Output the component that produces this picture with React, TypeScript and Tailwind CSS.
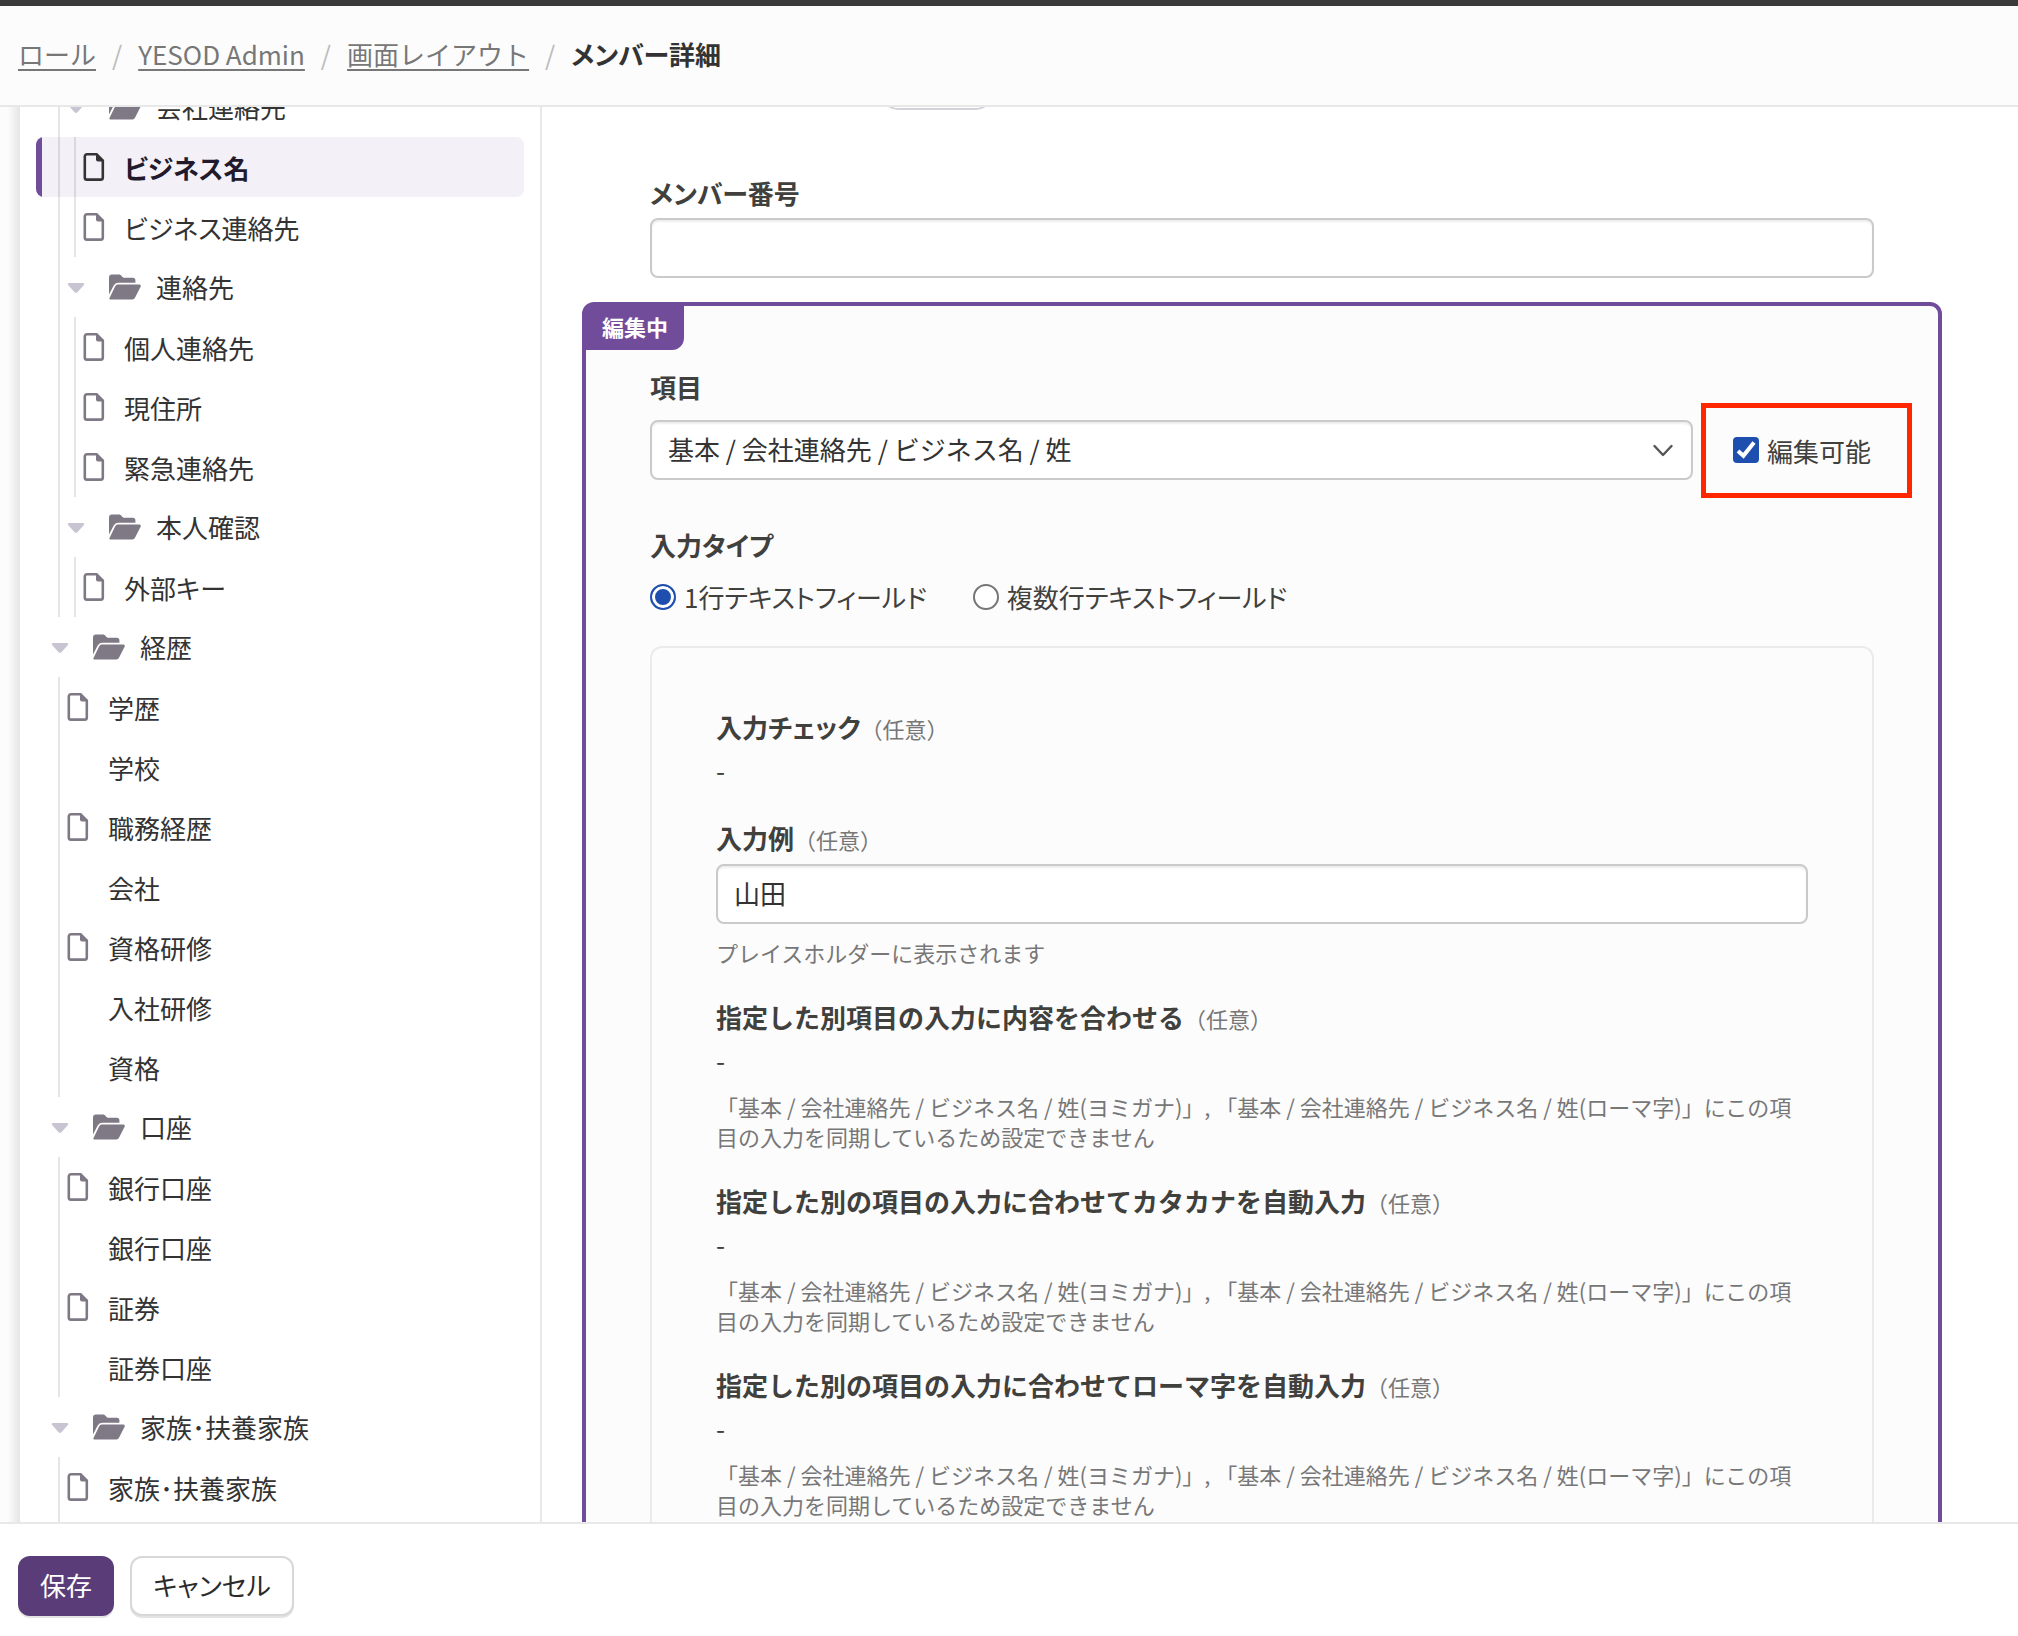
import { useState } from "react";

type TreeItem = {
  label: string;
  kind: "folder" | "file" | "entry";
  depth: 1 | 2;
  active?: boolean;
};

const treeItems: TreeItem[] = [
  { label: "会社連絡先", kind: "folder", depth: 2 },
  { label: "ビジネス名", kind: "file", depth: 2, active: true },
  { label: "ビジネス連絡先", kind: "file", depth: 2 },
  { label: "連絡先", kind: "folder", depth: 2 },
  { label: "個人連絡先", kind: "file", depth: 2 },
  { label: "現住所", kind: "file", depth: 2 },
  { label: "緊急連絡先", kind: "file", depth: 2 },
  { label: "本人確認", kind: "folder", depth: 2 },
  { label: "外部キー", kind: "file", depth: 2 },
  { label: "経歴", kind: "folder", depth: 1 },
  { label: "学歴", kind: "file", depth: 1 },
  { label: "学校", kind: "entry", depth: 1 },
  { label: "職務経歴", kind: "file", depth: 1 },
  { label: "会社", kind: "entry", depth: 1 },
  { label: "資格研修", kind: "file", depth: 1 },
  { label: "入社研修", kind: "entry", depth: 1 },
  { label: "資格", kind: "entry", depth: 1 },
  { label: "口座", kind: "folder", depth: 1 },
  { label: "銀行口座", kind: "file", depth: 1 },
  { label: "銀行口座", kind: "entry", depth: 1 },
  { label: "証券", kind: "file", depth: 1 },
  { label: "証券口座", kind: "entry", depth: 1 },
  { label: "家族･扶養家族", kind: "folder", depth: 1 },
  { label: "家族･扶養家族", kind: "file", depth: 1 },
];

const syncNote =
  "「基本 / 会社連絡先 / ビジネス名 / 姓(ヨミガナ)」, 「基本 / 会社連絡先 / ビジネス名 / 姓(ローマ字)」にこの項目の入力を同期しているため設定できません";

const inputClass =
  "block h-15 w-full rounded-lg border-2 border-[#cacaca] bg-white px-4 pb-1 text-[#333] shadow-[inset_0_2px_2px_#eeeeee] [font-feature-settings:normal]";

const noteClass =
  "mt-[13px] text-[22px] leading-[30px] text-[#777] [font-feature-settings:normal]";

const crumbClass =
  "underline decoration-2 underline-offset-4 [font-feature-settings:normal]";

const radioClass =
  "size-[26px] appearance-none rounded-full border-2 border-[#767676] bg-white checked:border-[#1f4fae] checked:bg-[#1f4fae] checked:shadow-[inset_0_0_0_3px_white]";

function FileIcon() {
  return (
    <svg width="22" height="30" viewBox="0 0 22 30" fill="none">
      <path
        d="M4 2.2H13.6L19.8 8.6V25.4A2.2 2.2 0 0 1 17.6 27.6H4A2.2 2.2 0 0 1 1.8 25.4V4.4A2.2 2.2 0 0 1 4 2.2Z"
        stroke="currentColor"
        strokeWidth="2.6"
      />
      <path d="M13 1.5V7.4A2 2 0 0 0 15 9.4H21Z" fill="currentColor" />
    </svg>
  );
}

function FolderIcon() {
  return (
    <svg width="32" height="26" viewBox="0 0 32 26" fill="currentColor">
      <path d="M0 20.5V3A2.6 2.6 0 0 1 2.6 .5H10A3 3 0 0 1 12.2 1.4L13.6 2.9A3 3 0 0 0 15.8 3.8H23.8A2.6 2.6 0 0 1 26.4 6.4V8.8H9A5 5 0 0 0 4.7 11.4Z" />
      <path d="M.4 24.2L6.1 12.4A3 3 0 0 1 8.8 10.6H30.4A1.4 1.4 0 0 1 31.6 12.7L26 23.8A3 3 0 0 1 23.3 25.5H1.3A.9.9 0 0 1 .4 24.2Z" />
    </svg>
  );
}

function CaretIcon() {
  return (
    <svg
      className="mt-1"
      width="18"
      height="12"
      viewBox="0 0 18 12"
      fill="#c9c4d1"
    >
      <path d="M2 1H16A1.2 1.2 0 0 1 16.9 3.1L10.4 10.2A2 2 0 0 1 7.6 10.2L1.1 3.1A1.2 1.2 0 0 1 2 1Z" />
    </svg>
  );
}

function TreeRow({ item }: { item: TreeItem }) {
  const nested = item.depth === 2;

  return (
    <li
      className={`flex h-15 overflow-hidden rounded-lg ${item.active ? "bg-[#f3f1f7]" : ""}`}
    >
      <span
        className={`w-[6px] shrink-0 ${item.active ? "bg-[#714c9b]" : ""}`}
      />
      {/* Guide lines */}
      <span
        className={`ml-4 w-[2px] shrink-0 ${nested || item.kind !== "folder" ? "bg-black/10" : ""}`}
      />
      {nested && (
        <span
          className={`ml-[14px] w-[2px] shrink-0 ${item.kind !== "folder" ? "bg-black/10" : ""}`}
        />
      )}
      {item.kind === "folder" ? (
        <button
          type="button"
          className="-ml-[9px] flex items-center pb-[2px] text-[#7f7985]"
        >
          <CaretIcon />
          <span className="mt-[2px] mr-[15px] ml-6">
            <FolderIcon />
          </span>
          <span className="text-[#333]">{item.label}</span>
        </button>
      ) : (
        <a
          href="#"
          className={`ml-[7px] flex items-center ${item.active ? "font-bold text-[#221a2c]" : "text-[#333]"}`}
        >
          <span
            className={`mr-[19px] w-[22px] ${item.active ? "text-[#333]" : "text-[#7f7985]"}`}
          >
            {item.kind === "file" && <FileIcon />}
          </span>
          {item.label}
        </a>
      )}
    </li>
  );
}

function FieldTitle({ children }: { children: string }) {
  return (
    <>
      <span className="font-bold">{children}</span>
      <span className="text-[22px] text-[#777] [font-feature-settings:normal]">
        （任意）
      </span>
    </>
  );
}

function ReadOnlyField({ title, note }: { title: string; note?: string }) {
  return (
    <div className={note ? "[font-feature-settings:normal]" : ""}>
      <h3 className="leading-10">
        <FieldTitle>{title}</FieldTitle>
      </h3>
      <p className="mt-1 leading-9">-</p>
      {note && <p className={noteClass}>{note}</p>}
    </div>
  );
}

function App() {
  const [memberNumber, setMemberNumber] = useState("");
  const [example, setExample] = useState("山田");
  const [editable, setEditable] = useState(true);
  const [inputType, setInputType] = useState("single");

  return (
    <div
      lang="ja"
      className="flex h-screen flex-col bg-white font-['Noto_Sans_CJK_JP',sans-serif] text-[26px] text-[#40403d] [font-feature-settings:'palt']"
    >
      <header className="shrink-0 border-t-6 border-b-2 border-t-[#3a3a3a] border-b-[#e8e8e8] bg-[#fcfcfc]">
        <nav className="flex h-[99px] items-center gap-4 px-[18px] pb-1 text-[#777]">
          <a href="#" className={crumbClass}>
            ロール
          </a>
          <span className="text-[#bbb]">/</span>
          <a href="#" className={crumbClass}>
            YESOD Admin
          </a>
          <span className="text-[#bbb]">/</span>
          <a href="#" className={crumbClass}>
            画面レイアウト
          </a>
          <span className="text-[#bbb]">/</span>
          <span className="font-bold text-[#333]">メンバー詳細</span>
        </nav>
      </header>

      <div className="flex min-h-0 flex-1 overflow-hidden">
        <div className="w-5 shrink-0 bg-linear-to-r from-[#fcfcfc] from-40% to-[#e5e5e5]" />
        <aside className="w-[522px] shrink-0 overflow-hidden border-r-2 border-[#e8e8e8] px-4">
          <ul className="-mt-[30px]">
            {treeItems.map((item, i) => (
              <TreeRow key={i} item={item} />
            ))}
          </ul>
          <div className="ml-[22px] h-4 w-[2px] bg-black/10" />
        </aside>

        <main className="min-w-0 flex-1 overflow-hidden pr-[76px] pl-10">
          {/* Heading row, scrolled under the header */}
          <div className="-mt-[31px] flex justify-start pl-[299px]">
            <span className="h-[34px] w-[112px] rounded-full border-2 border-[#d5d2dc]" />
          </div>

          <div className="mt-[63px] px-[68px]">
            <label
              htmlFor="member-number"
              className="block leading-10 font-bold"
            >
              メンバー番号
            </label>
            <input
              id="member-number"
              type="text"
              value={memberNumber}
              onChange={(e) => setMemberNumber(e.target.value)}
              className={`mt-[5px] ${inputClass}`}
            />
          </div>

          <section className="relative mt-6 rounded-xl border-4 border-[#714c9b] bg-[#fcfcfc] px-16 pt-[61px] pb-16">
            <span className="absolute top-0 left-0 rounded-br-xl bg-[#714c9b] px-4 pt-1 pb-2 text-[22px] leading-8 font-bold text-white">
              編集中
            </span>

            <label htmlFor="item" className="block leading-10 font-bold">
              項目
            </label>
            <div className="mt-[13px] flex items-center gap-10">
              <div className="relative flex-1">
                <select id="item" className={`appearance-none ${inputClass}`}>
                  <option>基本 / 会社連絡先 / ビジネス名 / 姓</option>
                </select>
                <svg
                  className="pointer-events-none absolute top-6 right-5"
                  width="20"
                  height="14"
                  viewBox="0 0 20 14"
                  fill="none"
                >
                  <path
                    d="M1.5 2L10 11L18.5 2"
                    stroke="#555"
                    strokeWidth="2.4"
                    strokeLinecap="round"
                    strokeLinejoin="round"
                  />
                </svg>
              </div>
              <div className="relative w-[141px]">
                <label className="flex items-center gap-2">
                  <span className="relative size-[26px]">
                    <input
                      type="checkbox"
                      checked={editable}
                      onChange={(e) => setEditable(e.target.checked)}
                      className="block size-[26px] appearance-none rounded border-2 border-[#767676] bg-white checked:border-[#1f4fae] checked:bg-[#1f4fae]"
                    />
                    {editable && (
                      <svg
                        className="pointer-events-none absolute inset-0"
                        width="26"
                        height="26"
                        viewBox="0 0 26 26"
                        fill="none"
                      >
                        <path
                          d="M5 14L10.4 18.8L21 5.4"
                          stroke="white"
                          strokeWidth="4"
                        />
                      </svg>
                    )}
                  </span>
                  編集可能
                </label>
                <div className="pointer-events-none absolute -inset-y-7 -right-[38px] -left-8 border-5 border-[#ff2600]" />
              </div>
            </div>

            <fieldset className="mt-[45px]">
              <legend className="leading-10 font-bold">入力タイプ</legend>
              <div className="mt-3 flex gap-[46px] leading-10">
                <label className="flex items-center gap-2">
                  <input
                    type="radio"
                    name="input-type"
                    checked={inputType === "single"}
                    onChange={() => setInputType("single")}
                    className={radioClass}
                  />
                  1行テキストフィールド
                </label>
                <label className="flex items-center gap-2">
                  <input
                    type="radio"
                    name="input-type"
                    checked={inputType === "multi"}
                    onChange={() => setInputType("multi")}
                    className={radioClass}
                  />
                  複数行テキストフィールド
                </label>
              </div>
            </fieldset>

            <div className="mt-[29px] flex flex-col gap-[30px] rounded-xl border-2 border-[#ebebeb] px-16 pt-[59px] pb-16">
              <ReadOnlyField title="入力チェック" />
              <div>
                <label htmlFor="example" className="block leading-10">
                  <FieldTitle>入力例</FieldTitle>
                </label>
                <input
                  id="example"
                  type="text"
                  value={example}
                  onChange={(e) => setExample(e.target.value)}
                  className={`mt-[5px] ${inputClass}`}
                />
                <p className={noteClass}>プレイスホルダーに表示されます</p>
              </div>
              <ReadOnlyField
                title="指定した別項目の入力に内容を合わせる"
                note={syncNote}
              />
              <ReadOnlyField
                title="指定した別の項目の入力に合わせてカタカナを自動入力"
                note={syncNote}
              />
              <ReadOnlyField
                title="指定した別の項目の入力に合わせてローマ字を自動入力"
                note={syncNote}
              />
            </div>
          </section>
        </main>
      </div>

      <footer className="flex shrink-0 items-start gap-4 border-t-2 border-[#e8e8e8] bg-white px-[18px] pt-8 pb-5">
        <button
          type="button"
          className="h-15 rounded-xl bg-[#5a3d78] px-[22px] pb-1 text-white shadow-[0_2px_0_#e4e4e4]"
        >
          保存
        </button>
        <button
          type="button"
          className="h-15 rounded-xl border-2 border-[#d8d8d8] bg-white px-[21px] pb-1 text-[#2b2b2b] shadow-[0_2px_0_#e4e4e4]"
        >
          キャンセル
        </button>
      </footer>
    </div>
  );
}

export default App;
